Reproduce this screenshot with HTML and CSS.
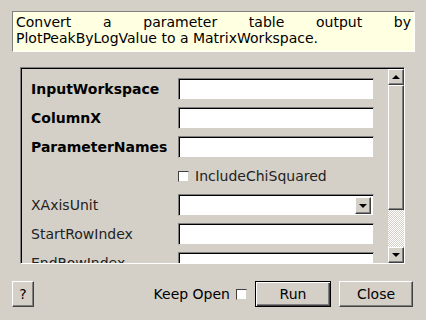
FILE: index.html
```html
<!DOCTYPE html>
<html lang="en">
<head>
    <meta charset="UTF-8">
    <title>ConvertParameterTableToMatrixWorkspace</title>
    <link rel="stylesheet" href="styles.css">
</head>
<body>
    <div class="dialog">
        <div class="description">
            Convert a parameter table output by PlotPeakByLogValue to a MatrixWorkspace.
        </div>

        <div class="panel">
            <div class="rows">
                <div class="row">
                    <label class="name required">InputWorkspace</label>
                    <div class="field"></div>
                </div>
                <div class="row">
                    <label class="name required">ColumnX</label>
                    <div class="field"></div>
                </div>
                <div class="row">
                    <label class="name required">ParameterNames</label>
                    <div class="field"></div>
                </div>
                <div class="row">
                    <span class="name"></span>
                    <span class="check"></span>
                    <span class="check-label">IncludeChiSquared</span>
                </div>
                <div class="row">
                    <label class="name">XAxisUnit</label>
                    <div class="field combo">
                        <span class="combo-btn"><span class="arrow-down"></span></span>
                    </div>
                </div>
                <div class="row">
                    <label class="name">StartRowIndex</label>
                    <div class="field"></div>
                </div>
                <div class="row">
                    <label class="name">EndRowIndex</label>
                    <div class="field"></div>
                </div>
            </div>

            <div class="scrollbar">
                <div class="sb-btn"><span class="arrow-up"></span></div>
                <div class="sb-thumb"></div>
                <div class="sb-track"></div>
                <div class="sb-btn"><span class="arrow-down"></span></div>
            </div>
        </div>

        <div class="buttons">
            <button class="btn help">?</button>
            <span class="spacer"></span>
            <span class="keep-open">Keep Open</span>
            <span class="check"></span>
            <button class="btn run">Run</button>
            <button class="btn close">Close</button>
        </div>
    </div>
</body>
</html>
```

FILE: styles.css
```css
body {
    margin: 0;
    background-color: #d4d0c8;
    color: #000;
    font-family: "DejaVu Sans", Verdana, sans-serif;
    font-size: 14px;
}

.dialog {
    width: 426px;
    height: 320px;
    padding-top: 11px;
    box-sizing: border-box;
}

.description {
    margin-left: 12px;
    width: 403px;
    height: 41px;
    box-sizing: border-box;
    padding: 2px 3px 0 3px;
    background-color: #ffffe1;
    border: 1px solid;
    border-color: #808080 #fff #fff #808080;
    text-align: justify;
    line-height: 16px;
}

.panel {
    display: flex;
    margin: 15px 0 0 20px;
    width: 385px;
    height: 197px;
    box-sizing: border-box;
    border: 1px solid;
    border-color: #808080 #fff #fff #808080;
    box-shadow: inset 1px 1px 0 #000;
    overflow: hidden;
}

.rows {
    flex: 1;
    padding: 10px 0 0 10px;
}

.row {
    display: flex;
    align-items: center;
    height: 22px;
    margin-bottom: 7px;
}

.name {
    width: 147px;
    flex: none;
    color: #222;
}

.required {
    font-weight: bold;
    color: #000;
}

.field {
    width: 196px;
    height: 22px;
    box-sizing: border-box;
    background-color: #fff;
    border: 1px solid;
    border-color: #808080 #d4d0c8 #d4d0c8 #808080;
    box-shadow: inset 1px 1px 0 #000;
}

.combo {
    display: flex;
    justify-content: flex-end;
    align-items: center;
    padding-right: 2px;
}

.combo-btn {
    width: 16px;
    height: 17px;
    margin-top: 1px;
    box-sizing: border-box;
    display: flex;
    align-items: center;
    justify-content: center;
    background-color: #d4d0c8;
    border: 1px solid;
    border-color: #fff #404040 #404040 #fff;
    box-shadow: inset -1px -1px 0 #808080;
}

.arrow-down,
.arrow-up {
    width: 0;
    height: 0;
    border-left: 4px solid transparent;
    border-right: 4px solid transparent;
}

.arrow-down {
    border-top: 4px solid #000;
}

.arrow-up {
    border-bottom: 4px solid #000;
}

.check {
    width: 11px;
    height: 11px;
    box-sizing: border-box;
    background-color: #fff;
    border: 1px solid;
    border-color: #404040 #d4d0c8 #d4d0c8 #404040;
    flex: none;
}

.check-label {
    margin-left: 6px;
    color: #222;
}

.scrollbar {
    width: 16px;
    display: flex;
    flex-direction: column;
    flex: none;
    padding-top: 1px;
}

.sb-btn,
.sb-thumb {
    box-sizing: border-box;
    background-color: #d4d0c8;
    border: 1px solid;
    border-color: #fff #404040 #404040 #fff;
    box-shadow: inset -1px -1px 0 #808080;
}

.sb-btn {
    height: 16px;
    display: flex;
    align-items: center;
    justify-content: center;
}

.sb-thumb {
    height: 125px;
}

.sb-track {
    flex: 1;
    background-color: #ece9e4;
    background-image: repeating-conic-gradient(#d4d0c8 0 25%, #fff 0 50%);
    background-size: 2px 2px;
}

.buttons {
    display: flex;
    align-items: center;
    margin: 17px 0 0 12px;
    width: 401px;
    height: 26px;
}

.spacer {
    flex: 1;
}

.btn {
    height: 26px;
    box-sizing: border-box;
    background-color: #d4d0c8;
    font-family: "DejaVu Sans", Verdana, sans-serif;
    font-size: 14px;
    color: #000;
    border: 1px solid;
    border-color: #fff #404040 #404040 #fff;
    box-shadow: inset -1px -1px 0 #808080;
    padding: 0;
}

.help {
    width: 22px;
}

.keep-open {
    margin-right: 6px;
}

.run {
    width: 76px;
    margin-left: 8px;
    border: 1px solid #000;
    box-shadow: inset 1px 1px 0 #fff, inset -1px -1px 0 #404040, inset -2px -2px 0 #808080;
}

.close {
    width: 74px;
    margin-left: 8px;
}
```
